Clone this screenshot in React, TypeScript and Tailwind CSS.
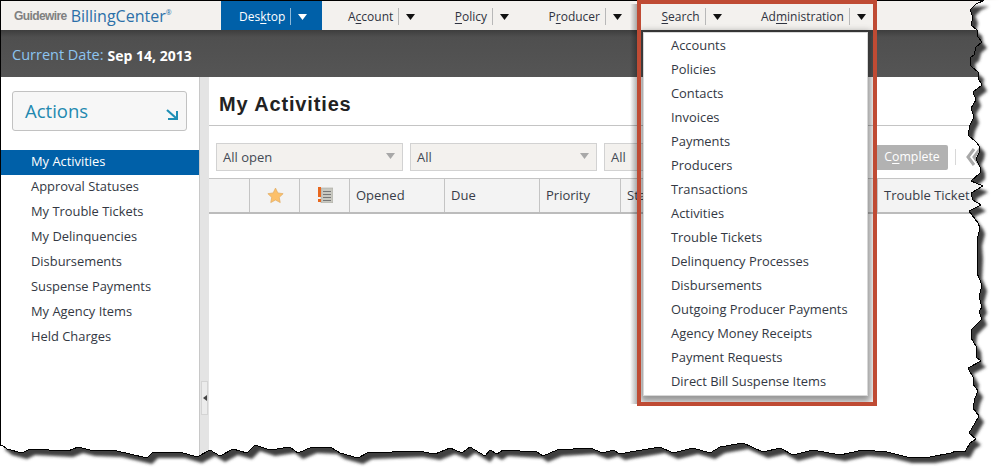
/* ================= DATA ================= */
const sideItems = [
  "My Activities",
  "Approval Statuses",
  "My Trouble Tickets",
  "My Delinquencies",
  "Disbursements",
  "Suspense Payments",
  "My Agency Items",
  "Held Charges",
];

const searchItems = [
  "Accounts",
  "Policies",
  "Contacts",
  "Invoices",
  "Payments",
  "Producers",
  "Transactions",
  "Activities",
  "Trouble Tickets",
  "Delinquency Processes",
  "Disbursements",
  "Outgoing Producer Payments",
  "Agency Money Receipts",
  "Payment Requests",
  "Direct Bill Suspense Items",
];

// torn paper edge, traced clockwise from the top right corner
const tornEdge =
  "984,0.5 976,4 970,10 973,17 971,25 977,30 978,37 982,42 976,47 974,55 970,58 971,66 979,73 978,78 982,85 973,92 976,100 971,108 974,117 970,125 968,135 976,142 980,147 979,153 976,159 980,167 980,173 971,181 983,186 971,193 973,200 981,205 969,211 978,223 980,228 977,240 978,253 977,273 982,285 979,297 982,307 979,312 982,319 972,329 971,338 976,346 977,358 981,361 968,368 974,379 973,384 978,391 975,398 973,408 979,416 975,423 969,433 976,439 970,443 965,452 956,451 951,453 930,457 907,457 887,452 863,450 840,455 813,450 793,455 780,448 763,452 743,443 720,447 710,453 693,448 673,453 660,447 630,452 620,454 613,450 603,453 590,448 557,450 543,456 537,452 503,450 497,454 490,450 485,456 470,447 462,453 450,448 435,454 418,451 367,453 358,458 340,453 332,448 312,447 298,453 290,447 270,450 255,445 247,453 233,449 220,456 210,450 197,457 180,452 153,452 147,458 117,451 90,450 78,447 68,451 30,449 22,453 7,449 2,445 0.5,445";

/* ================= SMALL PARTS ================= */
function Caret({ color = "#111" }: { color?: string }) {
  return (
    <svg width="9" height="6" viewBox="0 0 9 6" className="block">
      <polygon points="0,0 9,0 4.5,6" fill={color} />
    </svg>
  );
}

function NavItem({ before, mark, after }: { before: string; mark: string; after: string }) {
  return (
    <div className="flex items-center text-[12px] text-[#2f3340]">
      <span className="whitespace-nowrap">
        {before}
        <u className="underline-offset-2">{mark}</u>
        {after}
      </span>
      <span className="ml-[5px] h-[17px] w-px bg-[#b8b8b8]" />
      <span className="ml-[7px]">
        <Caret />
      </span>
    </div>
  );
}

function FilterSelect({ label }: { label: string }) {
  return (
    <div className="flex h-[28px] w-[187px] items-center justify-between border border-[#d2d2d2] bg-[#f3f1ee] pl-[6px] pr-[7px] text-[13px] text-[#444a55]">
      <span className="pt-[1px]">{label}</span>
      <span className="-mt-[3px]">
        <Caret color="#a8a8a8" />
      </span>
    </div>
  );
}

function HeaderCell({ children, center }: { children?: React.ReactNode; center?: boolean }) {
  return (
    <div
      className={`flex items-center overflow-hidden whitespace-nowrap border-r border-[#c4c4c4] ${
        center ? "justify-center" : "pl-[6px]"
      }`}
    >
      {children}
    </div>
  );
}

function TornOverlay() {
  const outside = `${tornEdge} 0,476 1001,476 1001,0`;
  const inside = `0.5,0.5 ${tornEdge}`;
  return (
    <svg width="1001" height="476" viewBox="0 0 1001 476" className="pointer-events-none absolute left-0 top-0">
      <defs>
        <filter id="tornBlur" x="-5%" y="-5%" width="110%" height="110%">
          <feGaussianBlur stdDeviation="1.8" />
        </filter>
        <clipPath id="tornOutside">
          <polygon points={outside} />
        </clipPath>
      </defs>
      <polygon points={outside} fill="#fff" />
      <g clipPath="url(#tornOutside)">
        <polygon points={inside} transform="translate(5 6)" fill="#404040" filter="url(#tornBlur)" />
      </g>
      <polygon points={inside} fill="none" stroke="#000" strokeWidth="1" shapeRendering="crispEdges" />
    </svg>
  );
}

/* ================= PAGE ================= */
export default function App() {
  return (
    <div className="relative flex h-[476px] w-[1001px] flex-col overflow-hidden bg-white font-['Open_Sans',sans-serif]">
      {/* ===== TOP NAV ===== */}
      <header className="flex h-[30px] shrink-0 bg-[#f3f1ee] pt-px">
        <div className="flex w-[221px] items-center pl-[14px] pt-[1px]">
          <span className="font-['Liberation_Sans',sans-serif] text-[12px] font-bold tracking-[-0.6px] text-[#808080]">
            Guidewire
          </span>
          <span className="ml-[4px] text-[16px] leading-none text-[#2b6fa8]">BillingCenter</span>
          <span className="-mt-[8px] text-[7px] leading-none text-[#2b6fa8]">®</span>
        </div>
        <div className="flex w-[101px] items-center bg-[#0060a8] pl-[18px] pt-[2px] text-[12px] text-white">
          <span>
            Des<u className="underline-offset-2">k</u>top
          </span>
          <span className="ml-[5px] h-[17px] w-px bg-[#8db8d8]" />
          <span className="ml-[7px]">
            <Caret color="#fff" />
          </span>
        </div>
        <nav className="flex items-center gap-[39.5px] pl-[26px] pt-[2px]">
          <NavItem before="A" mark="c" after="count" />
          <NavItem before="" mark="P" after="olicy" />
          <NavItem before="P" mark="r" after="oducer" />
          <NavItem before="" mark="S" after="earch" />
          <NavItem before="Ad" mark="m" after="inistration" />
        </nav>
      </header>

      {/* ===== DATE BAR ===== */}
      <div className="flex h-[47px] shrink-0 items-center bg-[linear-gradient(#3d3d3d,#4f4f4f_7px,#555555)] pl-[12px] pt-[3px] text-[14.5px]">
        <span className="text-[#8cc4f0]">Current Date:</span>
        <span className="ml-[4px] text-[14px] font-bold text-white">Sep 14, 2013</span>
      </div>

      <div className="flex min-h-0 flex-1">
        {/* ===== SIDEBAR ===== */}
        <aside className="w-[199px] shrink-0">
          <div className="ml-[12px] mt-[14px] flex h-[40px] w-[175px] items-center justify-between rounded-[3px] border border-[#c2c2c2] bg-[#f7f7f7] pl-[12px] pr-[8px]">
            <span className="text-[18.5px] text-[#2389b0]">Actions</span>
            <svg width="12" height="11" viewBox="0 0 12 11" className="mt-[6px]">
              <polyline points="1,1 10,9" fill="none" stroke="#1f8fb5" strokeWidth="2.2" />
              <polyline points="11,2 11,10 2,10" fill="none" stroke="#1f8fb5" strokeWidth="2" />
            </svg>
          </div>
          <ul className="mt-[19px]">
            {sideItems.map((item, idx) => (
              <li
                key={item}
                className={`flex h-[25px] items-center pl-[31px] pb-[2px] text-[12.9px] ${
                  idx === 0 ? "bg-[#0060a8] text-white" : "text-[#333843]"
                }`}
              >
                {item}
              </li>
            ))}
          </ul>
        </aside>

        {/* ===== SPLITTER ===== */}
        <div className="relative w-[10px] shrink-0 border-l border-[#c8c8c8] bg-[#e4e4e4]">
          <div className="absolute left-[1px] top-[304px] flex h-[34px] w-[7px] items-center justify-center border border-[#d4d4d4] bg-[#ececec]">
            <svg width="4" height="6" viewBox="0 0 4 6">
              <polygon points="4,0 4,6 0,3" fill="#444" />
            </svg>
          </div>
        </div>

        {/* ===== MAIN ===== */}
        <main className="min-w-0 flex-1">
          <div className="flex h-[49px] items-center border-b border-[#c4c4c4] pl-[10px] pt-[6px]">
            <h1 className="font-['Liberation_Sans',sans-serif] text-[20px] font-bold tracking-[0.85px] text-[#222]">
              My Activities
            </h1>
          </div>

          <div className="mt-[17px] flex items-center gap-[7px] pl-[7px]">
            <FilterSelect label="All open" />
            <FilterSelect label="All" />
            <FilterSelect label="All" />
            <div className="ml-[77px] flex h-[25px] w-[73px] items-center justify-center rounded-[2px] bg-[#b2b2b2] pl-[1px] text-[12.3px] text-white">
              <span>
                C<u className="underline-offset-2">o</u>mplete
              </span>
            </div>
            <span className="h-[16px] w-px bg-[#d8d8d8]" />
            <svg width="16" height="18" viewBox="0 0 16 18" className="ml-[3px]">
              <polyline points="8,1 2,9 8,17" fill="none" stroke="#a8a8a8" strokeWidth="3" />
              <polyline points="14,1 8,9 14,17" fill="none" stroke="#a8a8a8" strokeWidth="3" />
            </svg>
          </div>

          <div className="mt-[7px] grid h-[36px] w-[793px] grid-cols-[41px_50px_50px_95px_95px_81px_257px_124px] border-y border-t-[#c4c4c4] border-b-[#bcbcbc] border-b-2 bg-[#f3f3f3] text-[13px] text-[#383c48]">
            <HeaderCell />
            <HeaderCell center>
              <svg width="17" height="17" viewBox="0 0 24 24" className="ml-[1px]">
                <polygon
                  points="12,1.5 15.3,8.4 22.8,9.4 17.3,14.6 18.7,22 12,18.4 5.3,22 6.7,14.6 1.2,9.4 8.7,8.4"
                  fill="#fcc06a"
                  stroke="#e0aa62"
                  strokeWidth="1"
                />
              </svg>
            </HeaderCell>
            <HeaderCell center>
              <svg width="15" height="16" viewBox="0 0 15 16" className="-mt-[2px] ml-[2px]">
                <rect x="3" y="1" width="12" height="15" fill="#c8c8c0" stroke="#a8a8a0" strokeWidth="0.6" />
                <rect x="5" y="4" width="8" height="1" fill="#777" />
                <rect x="5" y="7" width="8" height="1" fill="#777" />
                <rect x="5" y="10" width="8" height="1" fill="#777" />
                <rect x="5" y="13" width="8" height="1" fill="#777" />
                <rect x="0" y="0" width="3" height="10" fill="#e8671e" />
                <rect x="0" y="12" width="3" height="3" fill="#e8671e" />
              </svg>
            </HeaderCell>
            <HeaderCell>Opened</HeaderCell>
            <HeaderCell>Due</HeaderCell>
            <HeaderCell>Priority</HeaderCell>
            <HeaderCell>Status</HeaderCell>
            <HeaderCell>Trouble Ticket</HeaderCell>
          </div>
        </main>
      </div>

      <TornOverlay />

      {/* ===== OPEN SEARCH MENU + CALLOUT ===== */}
      <div className="pointer-events-none absolute left-[637px] top-0 h-[406px] w-[240px] overflow-hidden border-4 border-[#bf4b34]">
        <div className="absolute left-[2px] top-[28px] w-[225px] border border-[#d8d8d8] bg-white pt-[1px] pb-[1px] shadow-[0_3px_7px_3px_rgba(0,0,0,0.42)]">
          {searchItems.map((item) => (
            <div key={item} className="flex h-[24px] items-center pl-[27px] text-[12.9px] text-[#333843]">
              {item}
            </div>
          ))}
        </div>
      </div>
      <div className="pointer-events-none absolute left-[630px] top-[4px] h-[400px] w-[7px] bg-[linear-gradient(90deg,rgba(0,0,0,0),rgba(0,0,0,0.3))]" />
    </div>
  );
}
